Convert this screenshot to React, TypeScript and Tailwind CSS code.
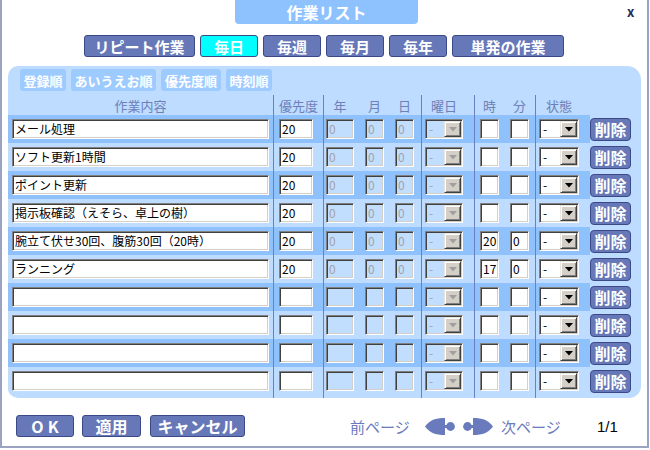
import React from "react";

const FONT = "font-['Noto_Sans_CJK_JP','Noto_Sans_CJK_SC',sans-serif]";
const INSET =
  "border border-t-[#808080] border-l-[#808080] border-r-[#ffffff] border-b-[#ffffff] shadow-[inset_1px_1px_0_#404040,inset_-1px_-1px_0_#d4d0c8]";
const RAISED =
  "border border-t-[#e8e6e0] border-l-[#e8e6e0] border-r-[#404040] border-b-[#404040] shadow-[inset_1px_1px_0_#ffffff,inset_-1px_-1px_0_#808080] bg-[#d4d0c8]";
const SEP = "border-l border-[#6b80c2]";

type Row = { name?: string; pri?: string; h?: string; m?: string; filled?: boolean };

const rows: Row[] = [
  { name: "メール処理", pri: "20", filled: true },
  { name: "ソフト更新1時間", pri: "20", filled: true },
  { name: "ポイント更新", pri: "20", filled: true },
  { name: "掲示板確認（えそら、卓上の樹）", pri: "20", filled: true },
  { name: "腕立て伏せ30回、腹筋30回（20時）", pri: "20", h: "20", m: "0", filled: true },
  { name: "ランニング", pri: "20", h: "17", m: "0", filled: true },
  {},
  {},
  {},
  {},
];

function TextBox({ w, value, disabled }: { w: string; value?: string; disabled?: boolean }) {
  return (
    <div
      className={`${w} h-[20px] ${INSET} ${
        disabled ? "bg-[#c2deff] text-[#a3a3a3]" : "bg-white text-black"
      } flex items-center pl-[2px] text-[12px] leading-none whitespace-nowrap overflow-hidden`}
    >
      {value}
    </div>
  );
}

function Select({ w, disabled }: { w: string; disabled?: boolean }) {
  return (
    <div
      className={`${w} h-[20px] ${INSET} ${
        disabled ? "bg-[#c2deff] text-[#a3a3a3]" : "bg-white text-black"
      } flex items-stretch p-[1px]`}
    >
      <div className="flex-1 flex items-center pl-[2px] text-[12px] leading-none">-</div>
      <div className={`w-[17px] ${RAISED} flex items-center justify-center`}>
        <svg width="8" height="5" viewBox="0 0 8 5">
          <path d="M0 0 L8 0 L4 4.5 Z" fill={disabled ? "#a0a0a0" : "#000"} />
        </svg>
      </div>
    </div>
  );
}

function Arrow({ flip }: { flip?: boolean }) {
  return (
    <svg width="30" height="17" viewBox="0 0 30 17" className={flip ? "-scale-x-100" : ""}>
      <path d="M0 8.5 C5 2 10 0 20 0 L20 17 C10 17 5 15 0 8.5 Z" fill="#6a7bbd" />
      <rect x="19" y="7" width="4" height="3" fill="#6a7bbd" />
      <circle cx="25.5" cy="8.5" r="4.4" fill="#6a7bbd" />
    </svg>
  );
}

function Tab({ label, w, active }: { label: string; w: string; active?: boolean }) {
  return (
    <div
      className={`${w} h-[22px] rounded-[3px] border border-[#3b4a86] ${
        active ? "bg-[#00ffff]" : "bg-[#6678b8]"
      } text-white text-[15px] font-bold flex items-center justify-center leading-none`}
    >
      {label}
    </div>
  );
}

function SortBtn({ label, w }: { label: string; w: string }) {
  return (
    <div
      className={`${w} h-[22px] rounded-[3px] bg-[#9ecbff] text-white text-[13px] font-bold flex items-center justify-center leading-none`}
    >
      {label}
    </div>
  );
}

function BottomBtn({ label, w, wide }: { label: string; w: string; wide?: boolean }) {
  return (
    <div
      className={`${w} h-[22px] rounded-[3px] border border-[#3b4a86] bg-[#6678b8] text-white text-[16px] font-bold flex items-center justify-center leading-none ${
        wide ? "tracking-[4px] pl-[4px]" : ""
      }`}
    >
      {label}
    </div>
  );
}

export default function App() {
  return (
    <div className={`w-[650px] h-[450px] bg-white ${FONT}`}>
      <div className="w-[649px] h-[448px] border-l-2 border-r-2 border-b-2 border-[#9aa3c2] flex flex-col">
        {/* title */}
        <div className="h-[24px] flex items-start">
          <div className="ml-[233px] w-[183px] h-[24px] bg-[#8ec2ff] rounded-b-[4px] flex items-center justify-center text-white text-[16px] font-bold leading-none">
            作業リスト
          </div>
          <div className="ml-[209px] mt-[5px] text-[13px] font-bold text-[#1f2b5c] leading-none">x</div>
        </div>

        {/* tabs */}
        <div className="mt-[11px] ml-[82px] flex gap-[5px]">
          <Tab label="リピート作業" w="w-[111px]" />
          <Tab label="毎日" w="w-[58px]" active />
          <Tab label="毎週" w="w-[58px]" />
          <Tab label="毎月" w="w-[58px]" />
          <Tab label="毎年" w="w-[58px]" />
          <Tab label="単発の作業" w="w-[112px]" />
        </div>

        {/* panel */}
        <div className="mt-[9px] ml-[6px] w-[633px] h-[332px] bg-[#bddcff] rounded-tl-[10px] rounded-tr-[14px] rounded-bl-[10px] rounded-br-[12px] overflow-hidden flex flex-col">
          <div className="pt-[3px] pl-[12px] flex gap-[5px]">
            <SortBtn label="登録順" w="w-[46px]" />
            <SortBtn label="あいうえお順" w="w-[85px]" />
            <SortBtn label="優先度順" w="w-[60px]" />
            <SortBtn label="時刻順" w="w-[46px]" />
          </div>

          {/* header */}
          <div className="mt-[4px] h-[20px] flex text-[13px] text-[#6f80b8] leading-none">
            <div className="w-[265px] flex items-center justify-center">作業内容</div>
            <div className={`w-[50px] ${SEP} flex items-center justify-center`}>優先度</div>
            <div className={`w-[98px] ${SEP} flex items-center`}>
              <span className="ml-[2px] w-[28px] text-center">年</span>
              <span className="ml-[11px] w-[19px] text-center">月</span>
              <span className="ml-[11px] w-[19px] text-center">日</span>
            </div>
            <div className={`w-[53px] ${SEP} flex items-center`}>
              <span className="ml-[3px] w-[38px] text-center">曜日</span>
            </div>
            <div className={`w-[61px] ${SEP} flex items-center`}>
              <span className="ml-[5px] w-[19px] text-center">時</span>
              <span className="ml-[11px] w-[19px] text-center">分</span>
            </div>
            <div className={`w-[55px] ${SEP} flex items-center`}>
              <span className="ml-[3px] w-[40px] text-center">状態</span>
            </div>
          </div>

          {/* rows */}
          {rows.map((r, i) => (
            <div key={i} className="h-[28px] flex">
              <div className={`flex ${i % 2 === 0 ? "bg-[#8fc1fd]" : "bg-[#bddcff]"}`}>
                <div className="w-[265px] flex items-center">
                  <div className="ml-[4px]">
                    <TextBox w="w-[257px]" value={r.name} />
                  </div>
                </div>
                <div className={`w-[50px] ${SEP} flex items-center`}>
                  <div className="ml-[5px]">
                    <TextBox w="w-[34px]" value={r.pri} />
                  </div>
                </div>
                <div className={`w-[98px] ${SEP} flex items-center`}>
                  <div className="ml-[2px]">
                    <TextBox w="w-[28px]" value={r.filled ? "0" : ""} disabled />
                  </div>
                  <div className="ml-[11px]">
                    <TextBox w="w-[19px]" value={r.filled ? "0" : ""} disabled />
                  </div>
                  <div className="ml-[11px]">
                    <TextBox w="w-[19px]" value={r.filled ? "0" : ""} disabled />
                  </div>
                </div>
                <div className={`w-[53px] ${SEP} flex items-center`}>
                  <div className="ml-[3px]">
                    <Select w="w-[38px]" disabled />
                  </div>
                </div>
                <div className={`w-[61px] ${SEP} flex items-center`}>
                  <div className="ml-[5px]">
                    <TextBox w="w-[19px]" value={r.h} />
                  </div>
                  <div className="ml-[11px]">
                    <TextBox w="w-[19px]" value={r.m} />
                  </div>
                </div>
                <div className={`w-[55px] ${SEP} flex items-center`}>
                  <div className="ml-[3px]">
                    <Select w="w-[40px]" />
                  </div>
                </div>
              </div>
              <div className="w-[51px] flex items-center">
                <div className="w-[41px] h-[23px] rounded-[4px] bg-[#6678b8] border border-[#3b4a86] text-white text-[16px] font-bold flex items-center justify-center leading-none">
                  削除
                </div>
              </div>
            </div>
          ))}
          <div className="flex-1 flex">
            <div className="w-[265px]" />
            <div className={`w-[50px] ${SEP}`} />
            <div className={`w-[98px] ${SEP}`} />
            <div className={`w-[53px] ${SEP}`} />
            <div className={`w-[61px] ${SEP}`} />
            <div className={`w-[55px] ${SEP}`} />
          </div>
        </div>

        {/* bottom */}
        <div className="mt-[17px] ml-[14px] h-[22px] flex items-center">
          <BottomBtn label="OK" w="w-[58px]" wide />
          <div className="ml-[8px]">
            <BottomBtn label="適用" w="w-[59px]" />
          </div>
          <div className="ml-[9px]">
            <BottomBtn label="キャンセル" w="w-[95px]" />
          </div>
          <span className="ml-[105px] w-[66px] text-[15px] text-[#6a7bbd] leading-none whitespace-nowrap">前ページ</span>
          <div className="ml-[9px] flex">
            <Arrow />
          </div>
          <div className="ml-[8px] flex">
            <Arrow flip />
          </div>
          <span className="ml-[8px] w-[63px] text-[15px] text-[#6a7bbd] leading-none whitespace-nowrap">次ページ</span>
          <span className="ml-[33px] text-[15px] text-black leading-none font-['Liberation_Sans',sans-serif]">1/1</span>
        </div>
      </div>
    </div>
  );
}
